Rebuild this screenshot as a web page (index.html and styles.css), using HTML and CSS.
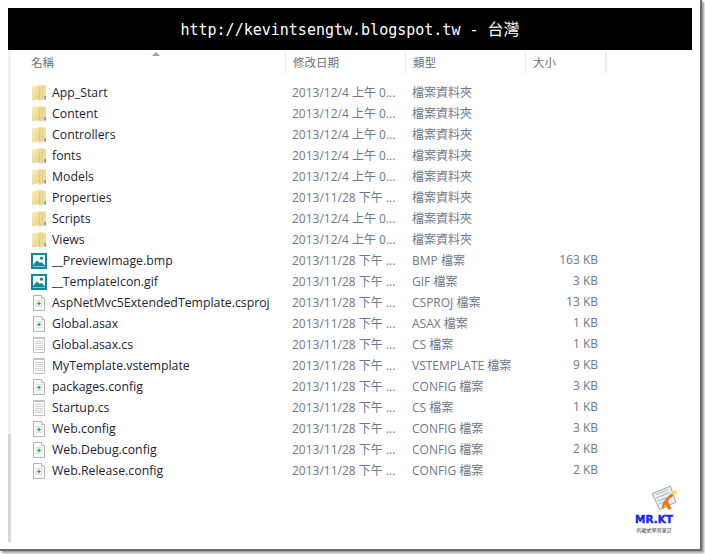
FILE: index.html
```html
<!DOCTYPE html>
<html lang="zh-Hant">
<head>
<meta charset="utf-8">
<title>Explorer</title>
<link rel="stylesheet" href="styles.css">
</head>
<body>
<svg class="defs" width="0" height="0" aria-hidden="true">
  <defs>
    <linearGradient id="fg" x1="0" y1="0" x2="1" y2="1">
      <stop offset="0" stop-color="#fbeeb6"/><stop offset="1" stop-color="#e8cd80"/>
    </linearGradient>
    <linearGradient id="fm" x1="0" y1="0" x2="1" y2="0">
      <stop offset="0" stop-color="#d9b968"/><stop offset=".5" stop-color="#f7e7a8"/><stop offset="1" stop-color="#dcc27a"/>
    </linearGradient>
    <symbol id="folder" viewBox="0 0 16 16" preserveAspectRatio="none">
      <path d="M1 1.5 10 0v14l-9 1.5z" fill="url(#fg)"/>
      <path d="M10 .5h4.2l.8 1V14.5H10z" fill="#f0dc9a"/>
      <path d="M8.5 2 11.5.8V15l-3 1z" fill="url(#fm)"/>
      <path d="M13.4 11h1.6v3.4h-1.6z" fill="#5a9ad4"/>
    </symbol>
    <symbol id="image" viewBox="0 0 16 16">
      <rect x="1" y="1" width="14" height="14" fill="#fff" stroke="#0f8a9b" stroke-width="2"/>
      <circle cx="10.5" cy="5.2" r="1.6" fill="#0f8a9b"/>
      <path d="M2 13.5V12l4-4.5L9 10l1.5-1 3.5 3.5v1z" fill="#0f8a9b"/>
    </symbol>
    <symbol id="code" viewBox="0 0 16 16">
      <path d="M2.5.5h8l3 3v12h-11z" fill="#fcfcfc" stroke="#b5b5b5"/>
      <path d="M10.5.5v3h3" fill="#f0f0f0" stroke="#c0c0c0"/>
      <rect x="5" y="5.5" width="6" height="6" fill="#f2f2f2" stroke="#d0d0d0" stroke-width=".6"/>
      <path d="M8 6.8v3.4M6.3 8.5h3.4" stroke="#1aa83a" stroke-width="1.2"/>
    </symbol>
    <symbol id="text" viewBox="0 0 16 16">
      <path d="M2.5.5h11v15h-11z" fill="#fcfcfc" stroke="#c4c4c4"/>
      <path d="M3 .8l1 1.2 1-1.2 1 1.2 1-1.2 1 1.2 1-1.2 1 1.2 1-1.2 1 1.2 1-1.2" fill="none" stroke="#a0a0a0" stroke-width=".6"/>
      <path d="M4 4.5h8M4 6.5h8M4 8.5h8M4 10.5h8M4 12.5h8" stroke="#cdd6e0"/>
    </symbol>
  </defs>
</svg>
<main class="frame">
  <header class="banner"><span class="banner-text">http://kevintsengtw.blogspot.tw - <span class="cjk">台灣</span></span></header>
  <section class="listing">
    <div class="head">
      <div class="hcell hname">名稱<span class="sort"></span></div>
      <div class="hcell">修改日期</div>
      <div class="hcell">類型</div>
      <div class="hcell">大小</div>
      <div class="hend"></div>
    </div>
    <ul class="rows">
      <li class="row"><span class="name"><svg class="ico"><use href="#folder"/></svg>App_Start</span><span class="date">2013/12/4 上午 0...</span><span class="type">檔案資料夾</span><span class="size"></span></li>
      <li class="row"><span class="name"><svg class="ico"><use href="#folder"/></svg>Content</span><span class="date">2013/12/4 上午 0...</span><span class="type">檔案資料夾</span><span class="size"></span></li>
      <li class="row"><span class="name"><svg class="ico"><use href="#folder"/></svg>Controllers</span><span class="date">2013/12/4 上午 0...</span><span class="type">檔案資料夾</span><span class="size"></span></li>
      <li class="row"><span class="name"><svg class="ico"><use href="#folder"/></svg>fonts</span><span class="date">2013/12/4 上午 0...</span><span class="type">檔案資料夾</span><span class="size"></span></li>
      <li class="row"><span class="name"><svg class="ico"><use href="#folder"/></svg>Models</span><span class="date">2013/12/4 上午 0...</span><span class="type">檔案資料夾</span><span class="size"></span></li>
      <li class="row"><span class="name"><svg class="ico"><use href="#folder"/></svg>Properties</span><span class="date">2013/11/28 下午 ...</span><span class="type">檔案資料夾</span><span class="size"></span></li>
      <li class="row"><span class="name"><svg class="ico"><use href="#folder"/></svg>Scripts</span><span class="date">2013/12/4 上午 0...</span><span class="type">檔案資料夾</span><span class="size"></span></li>
      <li class="row"><span class="name"><svg class="ico"><use href="#folder"/></svg>Views</span><span class="date">2013/12/4 上午 0...</span><span class="type">檔案資料夾</span><span class="size"></span></li>
      <li class="row"><span class="name"><svg class="ico"><use href="#image"/></svg>__PreviewImage.bmp</span><span class="date">2013/11/28 下午 ...</span><span class="type">BMP 檔案</span><span class="size">163 KB</span></li>
      <li class="row"><span class="name"><svg class="ico"><use href="#image"/></svg>__TemplateIcon.gif</span><span class="date">2013/11/28 下午 ...</span><span class="type">GIF 檔案</span><span class="size">3 KB</span></li>
      <li class="row"><span class="name"><svg class="ico"><use href="#code"/></svg>AspNetMvc5ExtendedTemplate.csproj</span><span class="date">2013/11/28 下午 ...</span><span class="type">CSPROJ 檔案</span><span class="size">13 KB</span></li>
      <li class="row"><span class="name"><svg class="ico"><use href="#code"/></svg>Global.asax</span><span class="date">2013/11/28 下午 ...</span><span class="type">ASAX 檔案</span><span class="size">1 KB</span></li>
      <li class="row"><span class="name"><svg class="ico"><use href="#text"/></svg>Global.asax.cs</span><span class="date">2013/11/28 下午 ...</span><span class="type">CS 檔案</span><span class="size">1 KB</span></li>
      <li class="row"><span class="name"><svg class="ico"><use href="#text"/></svg>MyTemplate.vstemplate</span><span class="date">2013/11/28 下午 ...</span><span class="type">VSTEMPLATE 檔案</span><span class="size">9 KB</span></li>
      <li class="row"><span class="name"><svg class="ico"><use href="#code"/></svg>packages.config</span><span class="date">2013/11/28 下午 ...</span><span class="type">CONFIG 檔案</span><span class="size">3 KB</span></li>
      <li class="row"><span class="name"><svg class="ico"><use href="#text"/></svg>Startup.cs</span><span class="date">2013/11/28 下午 ...</span><span class="type">CS 檔案</span><span class="size">1 KB</span></li>
      <li class="row"><span class="name"><svg class="ico"><use href="#code"/></svg>Web.config</span><span class="date">2013/11/28 下午 ...</span><span class="type">CONFIG 檔案</span><span class="size">3 KB</span></li>
      <li class="row"><span class="name"><svg class="ico"><use href="#code"/></svg>Web.Debug.config</span><span class="date">2013/11/28 下午 ...</span><span class="type">CONFIG 檔案</span><span class="size">2 KB</span></li>
      <li class="row"><span class="name"><svg class="ico"><use href="#code"/></svg>Web.Release.config</span><span class="date">2013/11/28 下午 ...</span><span class="type">CONFIG 檔案</span><span class="size">2 KB</span></li>
    </ul>
  </section>
  <aside class="logo">
    <svg class="logo-art" viewBox="0 0 26 26" aria-hidden="true">
      <path d="M2 8 19 1l5 15-15 7z" fill="#e9eef2" stroke="#8a8f94" stroke-width=".7"/>
      <path d="M5 9l12-5M6 12l12-5M7 15l8-3M8 18l6-3" stroke="#a9b6c2" stroke-width=".9"/>
      <path d="M11 21c1-6 4-9 9-13l2 2c-3 2-5 3-5 6l3 6-3 1-3-5-1 4z" fill="#e8781e"/>
      <circle cx="23" cy="7" r="2.2" fill="#f6e15f"/>
    </svg>
    <div class="logo-title">MR.KT</div>
    <div class="logo-sub">的褐式學習筆記</div>
  </aside>
</main>
</body>
</html>
```
FILE: styles.css
```css
* { box-sizing: border-box; }
html, body { margin: 0; padding: 0; background: #fff; }
body { width: 705px; height: 554px; overflow: hidden; font-family: "Open Sans", "Noto Sans CJK TC", sans-serif; }
.defs { position: absolute; }
.frame {
  position: relative;
  width: 702px;
  height: 551px;
  padding: 8px 8px 0 8px;
  background: #fff;
  border-right: 2px solid #6e6e6e;
  border-bottom: 2px solid #6e6e6e;
  box-shadow: 2px 2px 2px #9a9a9a;
}
.banner {
  height: 42px;
  background: #000;
  display: flex;
  align-items: center;
  justify-content: center;
  color: #fff;
}
.banner-text { font-family: "DejaVu Sans Mono", monospace; font-size: 15px; line-height: 1; }
.cjk { font-family: "Noto Sans CJK TC", sans-serif; font-size: 16px; }
.listing {
  height: 492px;
  padding-top: 1px;
  padding-left: 3px;
  background: linear-gradient(to bottom, #f0f0f0 0, #f0f0f0 78%, #d6d6d6 78%, #d6d6d6 100%) left top / 3px 100% no-repeat;
}
.head {
  display: grid;
  grid-template-columns: 275px 120px 120px 80px 1px;
  height: 21px;
  margin-bottom: 10px;
}
.hcell {
  position: relative;
  padding-left: 7px;
  font-size: 11.5px;
  line-height: 22px;
  color: #66727f;
  font-family: "Noto Sans CJK TC", sans-serif;
  border-right: 1px solid #e6edf4;
}
.hname { padding-left: 20px; }
.hend { border-right: 1px solid #e6edf4; }
.sort {
  position: absolute;
  left: 141px;
  top: 1px;
  border-left: 4px solid transparent;
  border-right: 4px solid transparent;
  border-bottom: 4px solid #8aa3b8;
}
.rows { list-style: none; margin: 0; padding: 0; }
.row {
  display: grid;
  grid-template-columns: 281px 120px 120px 66px;
  height: 21px;
  align-items: center;
  font-size: 12.3px;
  white-space: nowrap;
}
.name { display: flex; align-items: center; gap: 5px; padding-left: 20px; color: #1d2433; }
.ico { width: 16px; height: 16px; flex: none; }
.date, .type, .size { color: #6d7a8c; font-size: 12px; position: relative; top: -1px; }
.size { text-align: right; }
.logo {
  position: absolute;
  left: 631px;
  top: 485px;
  width: 46px;
  display: flex;
  flex-direction: column;
  align-items: center;
}
.logo-art { width: 28px; height: 28px; margin-left: 20px; }
.logo-title { font-family: "DejaVu Sans", sans-serif; font-weight: 700; font-size: 10.5px; line-height: 12px; color: #1726f0; -webkit-text-stroke: .4px #1726f0; }
.logo-sub { font-family: "Noto Sans CJK TC", sans-serif; font-size: 5px; line-height: 9px; color: #333; white-space: nowrap; }
```
